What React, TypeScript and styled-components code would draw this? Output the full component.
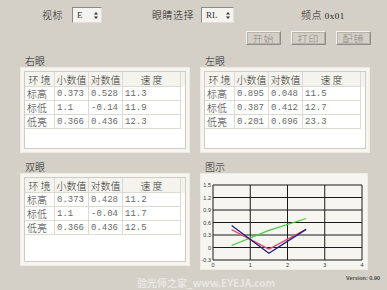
import React from 'react';
import styled, { createGlobalStyle } from 'styled-components';

const GlobalStyle = createGlobalStyle`
  html, body {
    margin: 0;
    padding: 0;
    background: #d4d0c8;
  }
  * {
    box-sizing: border-box;
  }
`;

const Window = styled.div`
  position: relative;
  width: 387px;
  height: 290px;
  overflow: hidden;
  background: #d4d0c8;
  padding-top: 7px;
  font-family: "Noto Sans CJK SC", "Liberation Sans", sans-serif;
  color: #222;
`;

const ControlRow = styled.div`
  display: flex;
  align-items: center;
  height: 16px;
`;

const FieldLabel = styled.span<{ ml: number }>`
  margin-left: ${p => p.ml}px;
  font-size: 10px;
  font-weight: 300;
  letter-spacing: 0.5px;
  line-height: 16px;
  color: #222;
  white-space: nowrap;
`;

const SelectBox = styled.div<{ w: number; ml: number }>`
  margin-left: ${p => p.ml}px;
  width: ${p => p.w}px;
  height: 16px;
  display: flex;
  align-items: center;
  justify-content: space-between;
  padding: 0 3px 0 4px;
  background: #f4f3f0;
  border: 1px solid #8c8a86;
  border-right-color: #e0ded8;
  border-bottom-color: #e0ded8;
  font-family: "Liberation Serif", serif;
  font-size: 9px;
  color: #333;
`;

const ButtonRow = styled.div`
  display: flex;
  justify-content: flex-end;
  gap: 10px;
  padding-right: 16px;
  margin-top: 8px;
  height: 14px;
`;

const Button = styled.div`
  width: 35px;
  height: 14px;
  display: flex;
  align-items: center;
  justify-content: center;
  border: 1px solid #8e8c88;
  border-top-color: #f4f2ee;
  border-left-color: #f4f2ee;
  outline: 1px solid #b6b3ac;
  outline-offset: -2px;
  font-size: 10px;
  font-weight: 300;
  letter-spacing: 1px;
  color: #8a8884;
`;

const Sections = styled.div`
  display: grid;
  grid-template-columns: 170px 170px;
  column-gap: 10px;
  row-gap: 8px;
  padding-left: 20px;
  margin-top: 10px;
`;

const Section = styled.div`
  display: flex;
  flex-direction: column;
`;

const SectionTitle = styled.div`
  height: 12px;
  padding-left: 5px;
  font-size: 10px;
  font-weight: 300;
  line-height: 12px;
  color: #222;
`;

const Panel = styled.div<{ h: number; w?: number; flat?: boolean }>`
  height: ${p => p.h}px;
  width: ${p => (p.w ? `${p.w}px` : '100%')};
  background: #f7f5ef;
  border: 1px solid #ecebe6;
  padding: ${p => (p.flat ? 0 : 3)}px;
`;

const ListBox = styled.div`
  height: 100%;
  background: #ffffff;
  border: 1px solid #cfccc5;
`;

const TableRow = styled.div<{ header?: boolean }>`
  display: grid;
  grid-template-columns: 30px 34px 34px 58px;
  height: ${p => (p.header ? 15 : 14)}px;
  background: ${p => (p.header ? '#f5f3ed' : '#ffffff')};
`;

const Cell = styled.div<{ header?: boolean; num?: boolean }>`
  display: flex;
  align-items: center;
  justify-content: ${p => (p.header ? 'center' : 'flex-start')};
  padding-left: ${p => (p.header ? 0 : 2)}px;
  border-right: 1px solid #dddad3;
  border-bottom: 1px solid #dddad3;
  font-family: ${p => (p.num ? '"Liberation Mono", monospace' : '"Noto Sans CJK SC", sans-serif')};
  font-size: ${p => (p.num ? 9 : 10)}px;
  font-weight: ${p => (p.num ? 400 : 300)};
  color: ${p => (p.num ? '#6a6a6a' : '#333')};
  white-space: pre;
  overflow: hidden;
`;

const Footer = styled.div`
  display: flex;
  justify-content: flex-end;
  padding-right: 7px;
  margin-top: 5px;
`;

const Version = styled.span`
  font-family: "Liberation Sans", sans-serif;
  font-size: 5.5px;
  font-weight: bold;
  color: #4a4a4a;
`;

const Watermark = styled.div`
  position: absolute;
  left: 137px;
  top: 277px;
  height: 12px;
  line-height: 12px;
  font-family: "Noto Sans CJK SC", "Liberation Sans", sans-serif;
  font-size: 10px;
  font-weight: bold;
  color: rgba(255, 255, 255, 0.5);
  white-space: nowrap;
`;

const SpinArrows = () => (
  <svg width="4" height="7" viewBox="0 0 4 7">
    <polygon points="2,0 4,2.5 0,2.5" fill="#333" />
    <polygon points="0,4.5 4,4.5 2,7" fill="#333" />
  </svg>
);

type Row = [string, string, string, string];

const rightEye: Row[] = [
  ['标高', '0.373', '0.528', '11.3'],
  ['标低', '1.1', '-0.14', '11.9'],
  ['低亮', '0.366', '0.436', '12.3'],
];

const leftEye: Row[] = [
  ['标高', '0.895', '0.048', '11.5'],
  ['标低', '0.387', '0.412', '12.7'],
  ['低亮', '0.201', '0.696', '23.3'],
];

const bothEyes: Row[] = [
  ['标高', '0.373', '0.428', '11.2'],
  ['标低', '1.1', '-0.04', '11.7'],
  ['低亮', '0.366', '0.436', '12.5'],
];

const ResultTable: React.FC<{ rows: Row[] }> = ({ rows }) => (
  <ListBox>
    <TableRow header>
      <Cell header>{'环 境'}</Cell>
      <Cell header>小数值</Cell>
      <Cell header>对数值</Cell>
      <Cell header>{'速 度'}</Cell>
    </TableRow>
    {rows.map(r => (
      <TableRow key={r[0]}>
        <Cell>{r[0]}</Cell>
        <Cell num>{r[1]}</Cell>
        <Cell num>{r[2]}</Cell>
        <Cell num>{r[3]}</Cell>
      </TableRow>
    ))}
  </ListBox>
);

// chart geometry (px inside the chart panel)
const X0 = 12;
const UNIT_X = 37.25;
const Y0 = 11;
const STEP_Y = 12.5;
const px = (v: number) => X0 + v * UNIT_X;
const py = (v: number) => Y0 + ((1.5 - v) / 0.3) * STEP_Y;

const series = [
  { color: '#46cc46', values: [0.048, 0.412, 0.696] },
  { color: '#e0506e', values: [0.428, -0.04, 0.436] },
  { color: '#1e1e86', values: [0.528, -0.14, 0.436] },
];

const yTicks = [1.5, 1.2, 0.9, 0.6, 0.3, 0, -0.3];
const yLabels = ['1.5', '1.2', '0.9', '0.6', '0.3', '0', '-0.3'];
const xTicks = [0, 1, 2, 3, 4];

const Chart = () => (
  <svg width="166" height="95" viewBox="0 0 166 95" style={{ display: 'block' }}>
    {xTicks.map(t => (
      <line key={'vx' + t} x1={px(t)} y1={py(1.5)} x2={px(t)} y2={py(-0.3)} stroke="#1a1a1a" strokeWidth="1" />
    ))}
    {yTicks.map(t => (
      <line key={'hy' + t} x1={px(0)} y1={py(t)} x2={px(4)} y2={py(t)} stroke="#1a1a1a" strokeWidth="1" />
    ))}
    {yTicks.map((t, i) => (
      <text
        key={'ly' + t}
        x={px(0) - 2}
        y={py(t) + 2}
        fontSize="5.5"
        textAnchor="end"
        fill="#333"
        fontFamily="Liberation Sans, sans-serif"
      >
        {yLabels[i]}
      </text>
    ))}
    {xTicks.map(t => (
      <text
        key={'lx' + t}
        x={px(t)}
        y={py(-0.3) + 7}
        fontSize="5.5"
        textAnchor="middle"
        fill="#333"
        fontFamily="Liberation Sans, sans-serif"
      >
        {t}
      </text>
    ))}
    {series.map(s => (
      <polyline
        key={s.color}
        points={s.values.map((v, i) => `${px(0.5 + i)},${py(v)}`).join(' ')}
        fill="none"
        stroke={s.color}
        strokeWidth="1.3"
      />
    ))}
  </svg>
);

export default function App() {
  return (
    <>
      <GlobalStyle />
      <Window>
        <ControlRow>
          <FieldLabel ml={42}>视标</FieldLabel>
          <SelectBox ml={9} w={30}>
            E <SpinArrows />
          </SelectBox>
          <FieldLabel ml={50}>眼睛选择</FieldLabel>
          <SelectBox ml={7} w={33}>
            RL <SpinArrows />
          </SelectBox>
          <FieldLabel ml={67}>
            频点 <span style={{ fontFamily: '"Liberation Serif", serif', fontSize: 9 }}>0x01</span>
          </FieldLabel>
        </ControlRow>
        <ButtonRow>
          <Button>开始</Button>
          <Button>打印</Button>
          <Button>配镜</Button>
        </ButtonRow>
        <Sections>
          <Section>
            <SectionTitle>右眼</SectionTitle>
            <Panel h={86}>
              <ResultTable rows={rightEye} />
            </Panel>
          </Section>
          <Section>
            <SectionTitle>左眼</SectionTitle>
            <Panel h={86}>
              <ResultTable rows={leftEye} />
            </Panel>
          </Section>
          <Section>
            <SectionTitle>双眼</SectionTitle>
            <Panel h={93}>
              <ResultTable rows={bothEyes} />
            </Panel>
          </Section>
          <Section>
            <SectionTitle>图示</SectionTitle>
            <Panel h={97} w={168} flat>
              <Chart />
            </Panel>
          </Section>
        </Sections>
        <Footer>
          <Version>Version: 0.90</Version>
        </Footer>
        <Watermark>验光师之家_www.EYEJA.com</Watermark>
      </Window>
    </>
  );
}
